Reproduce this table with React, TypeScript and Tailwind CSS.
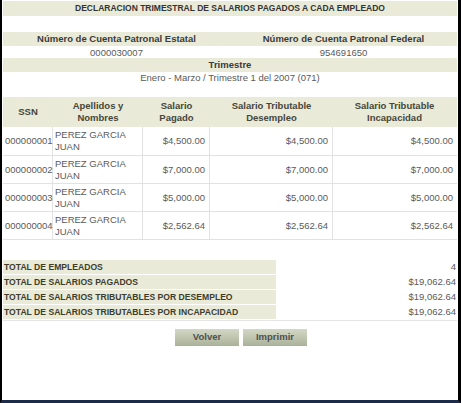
import React from 'react'

const rows = [
  { ssn: '000000001', name: 'PEREZ GARCIA JUAN', pagado: '$4,500.00', desempleo: '$4,500.00', incapacidad: '$4,500.00' },
  { ssn: '000000002', name: 'PEREZ GARCIA JUAN', pagado: '$7,000.00', desempleo: '$7,000.00', incapacidad: '$7,000.00' },
  { ssn: '000000003', name: 'PEREZ GARCIA JUAN', pagado: '$5,000.00', desempleo: '$5,000.00', incapacidad: '$5,000.00' },
  { ssn: '000000004', name: 'PEREZ GARCIA JUAN', pagado: '$2,562.64', desempleo: '$2,562.64', incapacidad: '$2,562.64' },
]

const totals = [
  { label: 'TOTAL DE EMPLEADOS', value: '4' },
  { label: 'TOTAL DE SALARIOS PAGADOS', value: '$19,062.64' },
  { label: 'TOTAL DE SALARIOS TRIBUTABLES POR DESEMPLEO', value: '$19,062.64' },
  { label: 'TOTAL DE SALARIOS TRIBUTABLES POR INCAPACIDAD', value: '$19,062.64' },
]

const cols = 'grid grid-cols-[50px_90px_67px_123px_123px]'

export default function App() {
  return (
    <div
      className="w-[461px] h-[403px] bg-white border-l-2 border-r-[3px] border-b-[3px] border-l-black border-r-black border-b-[#1c2b4a] overflow-hidden text-[#5a5a5a]"
      style={{ fontFamily: '"Liberation Sans", Arial, sans-serif' }}
    >
      <div className="px-[1px]">
        {/* title */}
        <div className="mt-[1px] h-[15px] bg-[#e9ead8] flex items-center justify-center text-[8.5px] font-bold text-[#333]">
          DECLARACION TRIMESTRAL DE SALARIOS PAGADOS A CADA EMPLEADO
        </div>

        {/* cuentas */}
        <div className="mt-[16px] grid grid-cols-2 h-[14px] bg-[#e9ead8] items-center text-[9.5px] font-bold text-[#3a3a3a]">
          <div className="text-center">Número de Cuenta Patronal Estatal</div>
          <div className="text-center">Número de Cuenta Patronal Federal</div>
        </div>
        <div className="grid grid-cols-2 h-[12px] items-center text-[9.5px]">
          <div className="text-center">0000030007</div>
          <div className="text-center">954691650</div>
        </div>
        <div className="h-[14px] bg-[#e9ead8] flex items-center justify-center text-[9.5px] font-bold text-[#3a3a3a]">
          Trimestre
        </div>
        <div className="h-[13px] flex items-center justify-center text-[9.5px]">
          Enero - Marzo / Trimestre 1 del 2007 (071)
        </div>

        {/* detalle */}
        <div className="mt-[12px] border-b border-[#e2e2e2]">
          <div className={`${cols} h-[30px] bg-[#e9ead8] items-center text-center text-[9.5px] font-bold text-[#46463a] leading-[12px]`}>
            <div>SSN</div>
            <div>Apellidos y<br />Nombres</div>
            <div>Salario<br />Pagado</div>
            <div>Salario Tributable<br />Desempleo</div>
            <div>Salario Tributable<br />Incapacidad</div>
          </div>
          {rows.map((r, i) => (
            <div
              key={r.ssn}
              className={`${cols} h-[28px] text-[9.5px] leading-[12px] ${i > 0 ? 'border-t border-[#e2e2e2]' : ''}`}
            >
              <div className="flex items-center pl-[2px] border-r border-[#e2e2e2]">{r.ssn}</div>
              <div className="flex items-center pl-[2px] pr-[14px] border-r border-[#e2e2e2]">{r.name}</div>
              <div className="flex items-center justify-end pr-[4px] border-r border-[#e2e2e2]">{r.pagado}</div>
              <div className="flex items-center justify-end pr-[4px] border-r border-[#e2e2e2]">{r.desempleo}</div>
              <div className="flex items-center justify-end pr-[3px]">{r.incapacidad}</div>
            </div>
          ))}
        </div>

        {/* totales */}
        <div className="mt-[20px] flex flex-col gap-[1px] pb-[1px] border-b border-[#e6e6e6]">
          {totals.map((t) => (
            <div key={t.label} className="grid grid-cols-[273px_1fr] h-[14px] items-center">
              <div className="h-full bg-[#e9ead8] flex items-center pl-[1px] text-[8.6px] font-bold text-[#3d3d2d]">{t.label}</div>
              <div className="text-right pr-[1px] text-[9.5px]">{t.value}</div>
            </div>
          ))}
        </div>

        {/* botones */}
        <div className="mt-[8px] flex gap-[4px] pl-[172px]">
          <button className="w-[64px] h-[17px] bg-gradient-to-b from-[#d3d8c6] via-[#bfc5af] to-[#a9b19b] text-[9.5px] font-bold text-[#4f4f4f]">
            Volver
          </button>
          <button className="w-[64px] h-[17px] bg-gradient-to-b from-[#d3d8c6] via-[#bfc5af] to-[#a9b19b] text-[9.5px] font-bold text-[#4f4f4f]">
            Imprimir
          </button>
        </div>
      </div>
    </div>
  )
}
